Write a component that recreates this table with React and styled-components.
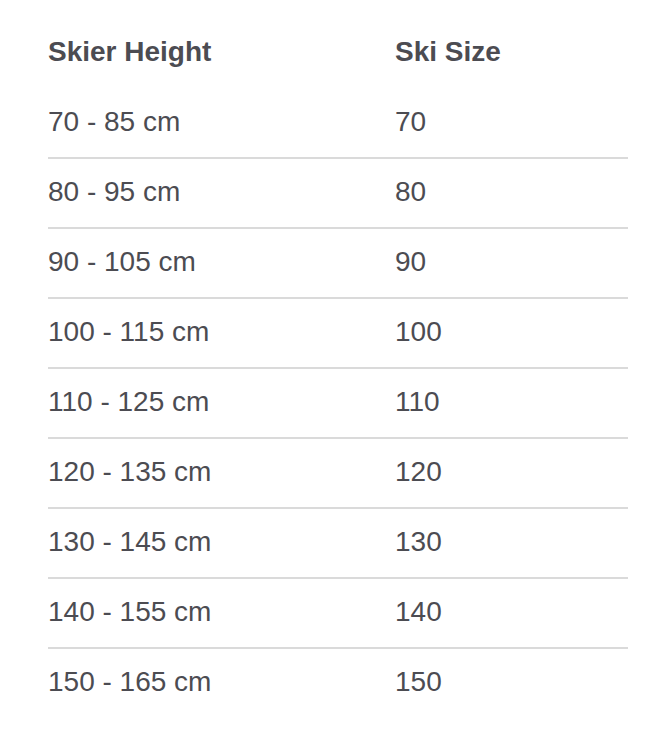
import styled, { createGlobalStyle } from 'styled-components';

const GlobalStyle = createGlobalStyle`
  body {
    margin: 0;
    background: #fff;
    font-family: "Liberation Sans", Arial, sans-serif;
  }
`

const Wrapper = styled.div`
  padding: 19px 20px 0 48px;
`

const Table = styled.table`
  width: 580px;
  border-collapse: collapse;
  color: #4c4c52;
`

const Row = styled.tr`
  border-bottom: 2px solid ${props => (props.$line ? '#dadada' : 'transparent')};
`

const HeadCell = styled.th`
  height: 68px;
  box-sizing: border-box;
  padding: 17px 0 19px;
  text-align: left;
  vertical-align: top;
  font-size: 28px;
  line-height: 32px;
  font-weight: bold;
  width: ${props => props.$width || 'auto'};
`

const Cell = styled.td`
  height: 68px;
  box-sizing: border-box;
  padding: 17px 0 19px;
  vertical-align: top;
  font-size: 28px;
  line-height: 32px;
`

const sizes = [70, 80, 90, 100, 110, 120, 130, 140, 150];

function App() {
  return <>
    <GlobalStyle />
    <Wrapper>
      <Table>
        <thead>
          <Row>
            <HeadCell $width="347px">Skier Height</HeadCell>
            <HeadCell>Ski Size</HeadCell>
          </Row>
        </thead>
        <tbody>
          {sizes.map((size, index) => (
            <Row key={size} $line={index < sizes.length - 1}>
              <Cell>{size} - {size + 15} cm</Cell>
              <Cell>{size}</Cell>
            </Row>
          ))}
        </tbody>
      </Table>
    </Wrapper>
  </>
}

export default App;
